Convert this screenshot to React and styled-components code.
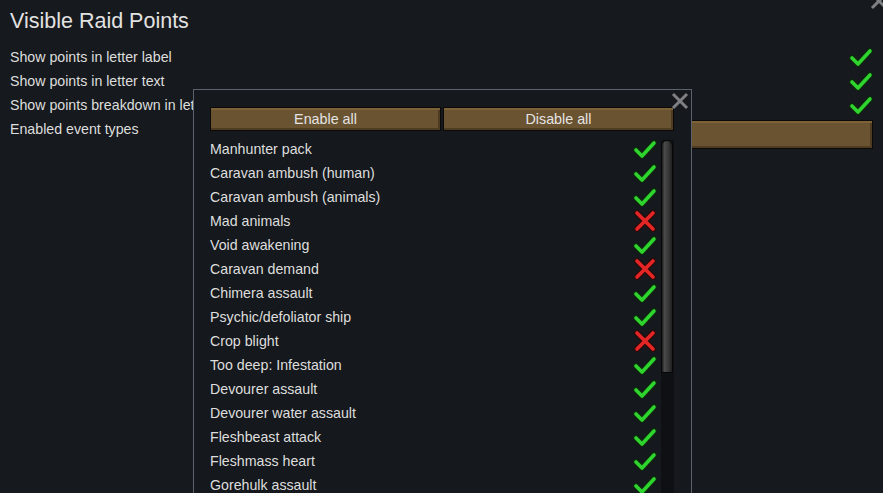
import React from "react";
import styled, { createGlobalStyle } from "styled-components";

const GlobalStyle = createGlobalStyle`
  html, body {
    margin: 0;
    padding: 0;
    background: #16191d;
    overflow: hidden;
  }
  body {
    font-family: "Liberation Sans", Arial, sans-serif;
    color: #dedede;
  }
`;

const Page = styled.div`
  position: relative;
  width: 883px;
  height: 493px;
  background: #16191d;
  overflow: hidden;
`;

const Main = styled.div`
  display: flex;
  flex-direction: column;
  padding: 0 10px;
`;

const Title = styled.h1`
  margin: 0;
  height: 45px;
  line-height: 42px;
  font-size: 21.5px;
  font-weight: 400;
  color: #e2e2e2;
`;

const SettingRow = styled.div`
  display: flex;
  align-items: flex-start;
  justify-content: space-between;
  min-height: 24px;
`;

const Label = styled.span`
  font-size: 14.2px;
  line-height: 24px;
  white-space: nowrap;
`;

const IconSlot = styled.span`
  display: flex;
  align-items: center;
  justify-content: center;
  width: 24px;
  height: 24px;
`;

const Button = styled.button`
  height: ${(p) => p.$h || 24}px;
  width: ${(p) => (p.$w ? `${p.$w}px` : "auto")};
  flex: ${(p) => (p.$grow ? 1 : "none")};
  margin-top: ${(p) => p.$mt || 0}px;
  padding: 0;
  border: 1px solid #0b0a08;
  background: #6a5331;
  box-shadow: inset 0 2px 0 #7c6139, inset -2px -2px 0 #4e3c23;
  color: #e4e4e4;
  font-family: "Liberation Sans", Arial, sans-serif;
  font-size: 14.3px;
`;

const CloseX = styled.span`
  position: absolute;
  top: ${(p) => p.$top}px;
  right: ${(p) => p.$right}px;
  width: 18px;
  height: 18px;
`;

const Dialog = styled.div`
  position: absolute;
  left: 193px;
  top: 89px;
  width: 499px;
  height: 420px;
  box-sizing: border-box;
  border: 1px solid #5b626c;
  background: #15181c;
  padding: 17px 17px 0 16px;
`;

const DialogInner = styled.div`
  display: flex;
  flex-direction: column;
`;

const ButtonBar = styled.div`
  display: flex;
  gap: 2px;
  height: 24px;
`;

const ListArea = styled.div`
  display: flex;
  margin-top: 6px;
`;

const List = styled.div`
  display: flex;
  flex-direction: column;
  width: 450px;
`;

const ListRow = styled.div`
  display: flex;
  align-items: center;
  justify-content: space-between;
  height: 24px;
  padding-right: 3px;
`;

const ListLabel = styled.span`
  font-size: 14.2px;
  line-height: 24px;
`;

const Track = styled.div`
  width: 13px;
  margin-top: 3px;
  height: 400px;
  background: #0e1013;
  margin-left: 1px;
`;

const Thumb = styled.div`
  width: 12px;
  height: 233px;
  border-radius: 6px 6px 2px 2px;
  background: linear-gradient(90deg, #1c1c1c 0%, #4a4a4a 25%, #3a3a3a 60%, #202020 100%);
  border: 1px solid #070707;
  box-sizing: border-box;
`;

const Check = () => (
  <svg width="24" height="22" viewBox="0 0 24 22">
    <polyline points="3,12 9,18 21,5" fill="none" stroke="#0d2a0d" strokeWidth="6" strokeLinecap="round" strokeLinejoin="round" />
    <polyline points="3,12 9,18 21,5" fill="none" stroke="#2fd42f" strokeWidth="3.6" strokeLinecap="round" strokeLinejoin="round" />
  </svg>
);

const Cross = () => (
  <svg width="24" height="22" viewBox="0 0 24 22">
    <path d="M4,3 L20,19 M20,3 L4,19" fill="none" stroke="#2e0a0a" strokeWidth="6" strokeLinecap="round" />
    <path d="M4,3 L20,19 M20,3 L4,19" fill="none" stroke="#e42626" strokeWidth="3.6" strokeLinecap="round" />
  </svg>
);

const XGlyph = () => (
  <svg width="18" height="18" viewBox="0 0 18 18">
    <path d="M2,2 L16,16 M16,2 L2,16" stroke="#7e8083" strokeWidth="3" />
  </svg>
);

const settings = [
  "Show points in letter label",
  "Show points in letter text",
  "Show points breakdown in letter text",
];

const events = [
  ["Manhunter pack", true],
  ["Caravan ambush (human)", true],
  ["Caravan ambush (animals)", true],
  ["Mad animals", false],
  ["Void awakening", true],
  ["Caravan demand", false],
  ["Chimera assault", true],
  ["Psychic/defoliator ship", true],
  ["Crop blight", false],
  ["Too deep: Infestation", true],
  ["Devourer assault", true],
  ["Devourer water assault", true],
  ["Fleshbeast attack", true],
  ["Fleshmass heart", true],
  ["Gorehulk assault", true],
];

export default function App() {
  return (
    <Page>
      <GlobalStyle />
      <Main>
        <Title>Visible Raid Points</Title>
        {settings.map((s) => (
          <SettingRow key={s}>
            <Label>{s}</Label>
            <IconSlot>
              <Check />
            </IconSlot>
          </SettingRow>
        ))}
        <SettingRow>
          <Label>Enabled event types</Label>
          <Button $w={433} $h={29} $mt={3} />
        </SettingRow>
      </Main>
      <CloseX $top={-8} $right={-5}>
        <XGlyph />
      </CloseX>

      <Dialog>
        <CloseX $top={2} $right={2}>
          <XGlyph />
        </CloseX>
        <DialogInner>
          <ButtonBar>
            <Button $grow>Enable all</Button>
            <Button $grow>Disable all</Button>
          </ButtonBar>
          <ListArea>
            <List>
              {events.map(([name, on]) => (
                <ListRow key={name}>
                  <ListLabel>{name}</ListLabel>
                  {on ? <Check /> : <Cross />}
                </ListRow>
              ))}
            </List>
            <Track>
              <Thumb />
            </Track>
          </ListArea>
        </DialogInner>
      </Dialog>
    </Page>
  );
}
